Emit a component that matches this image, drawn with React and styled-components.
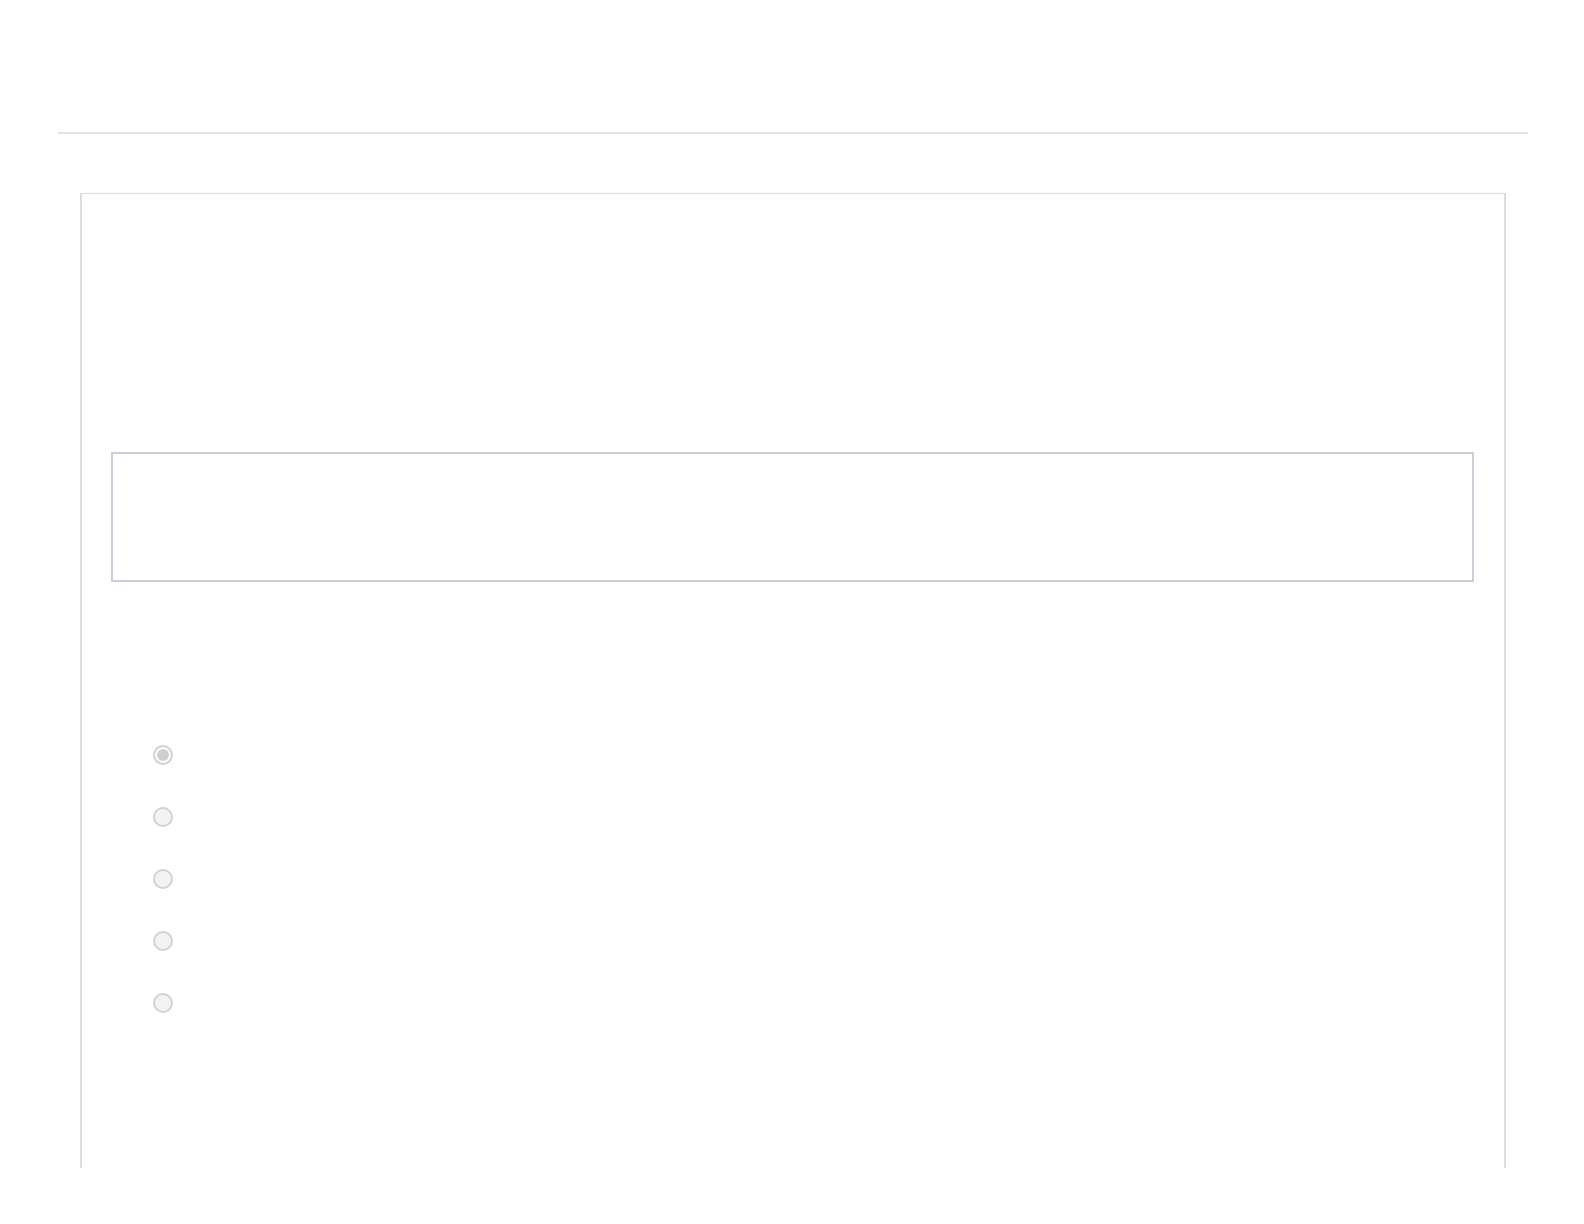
import React from 'react';
import styled, { createGlobalStyle } from 'styled-components';

const GlobalStyle = createGlobalStyle`
  html, body {
    margin: 0;
    padding: 0;
    background: #fff;
    font-family: 'Liberation Sans', Arial, sans-serif;
  }
`;

const Page = styled.div`
  width: 1584px;
  height: 1224px;
  overflow: hidden;
`;

const TopBar = styled.header`
  height: 132px;
  margin: 0 56px 0 58px;
  border-bottom: 2px solid #e5e1e3;
`;

const Card = styled.section`
  box-sizing: border-box;
  width: 1426px;
  height: 975px;
  margin: 59px 0 0 80px;
  border: 2px solid #dcdcdc;
  border-top-width: 1px;
  border-bottom: none;
  padding: 258px 30px 0 29px;
`;

const AnswerBox = styled.div`
  box-sizing: border-box;
  height: 130px;
  border: 2px solid #c9cfd8;
  background: #fff;
`;

const Options = styled.div`
  display: flex;
  flex-direction: column;
  margin-top: 163px;
  padding-left: 42px;
`;

const OptionRow = styled.label`
  display: flex;
  align-items: flex-start;
  height: 62px;
`;

const Radio = styled.input.attrs({ type: 'radio' })`
  appearance: none;
  box-sizing: border-box;
  width: 20px;
  height: 20px;
  margin: 0;
  border-radius: 50%;
  border: 2px solid #d2d2d2;
  background: ${p => (p.checked ? '#fff' : '#f3f3f3')};
  box-shadow: ${p => (p.checked ? 'inset 0 0 0 2px #fff, inset 0 0 0 10px #cfcfcf' : 'none')};
`;

const options = [true, false, false, false, false];

const App = () => (
  <>
    <GlobalStyle />
    <Page>
      <TopBar />
      <Card>
        <AnswerBox />
        <Options>
          {options.map((checked, i) => (
            <OptionRow key={i}>
              <Radio name="choice" checked={checked} disabled readOnly />
            </OptionRow>
          ))}
        </Options>
      </Card>
    </Page>
  </>
);

export default App;
